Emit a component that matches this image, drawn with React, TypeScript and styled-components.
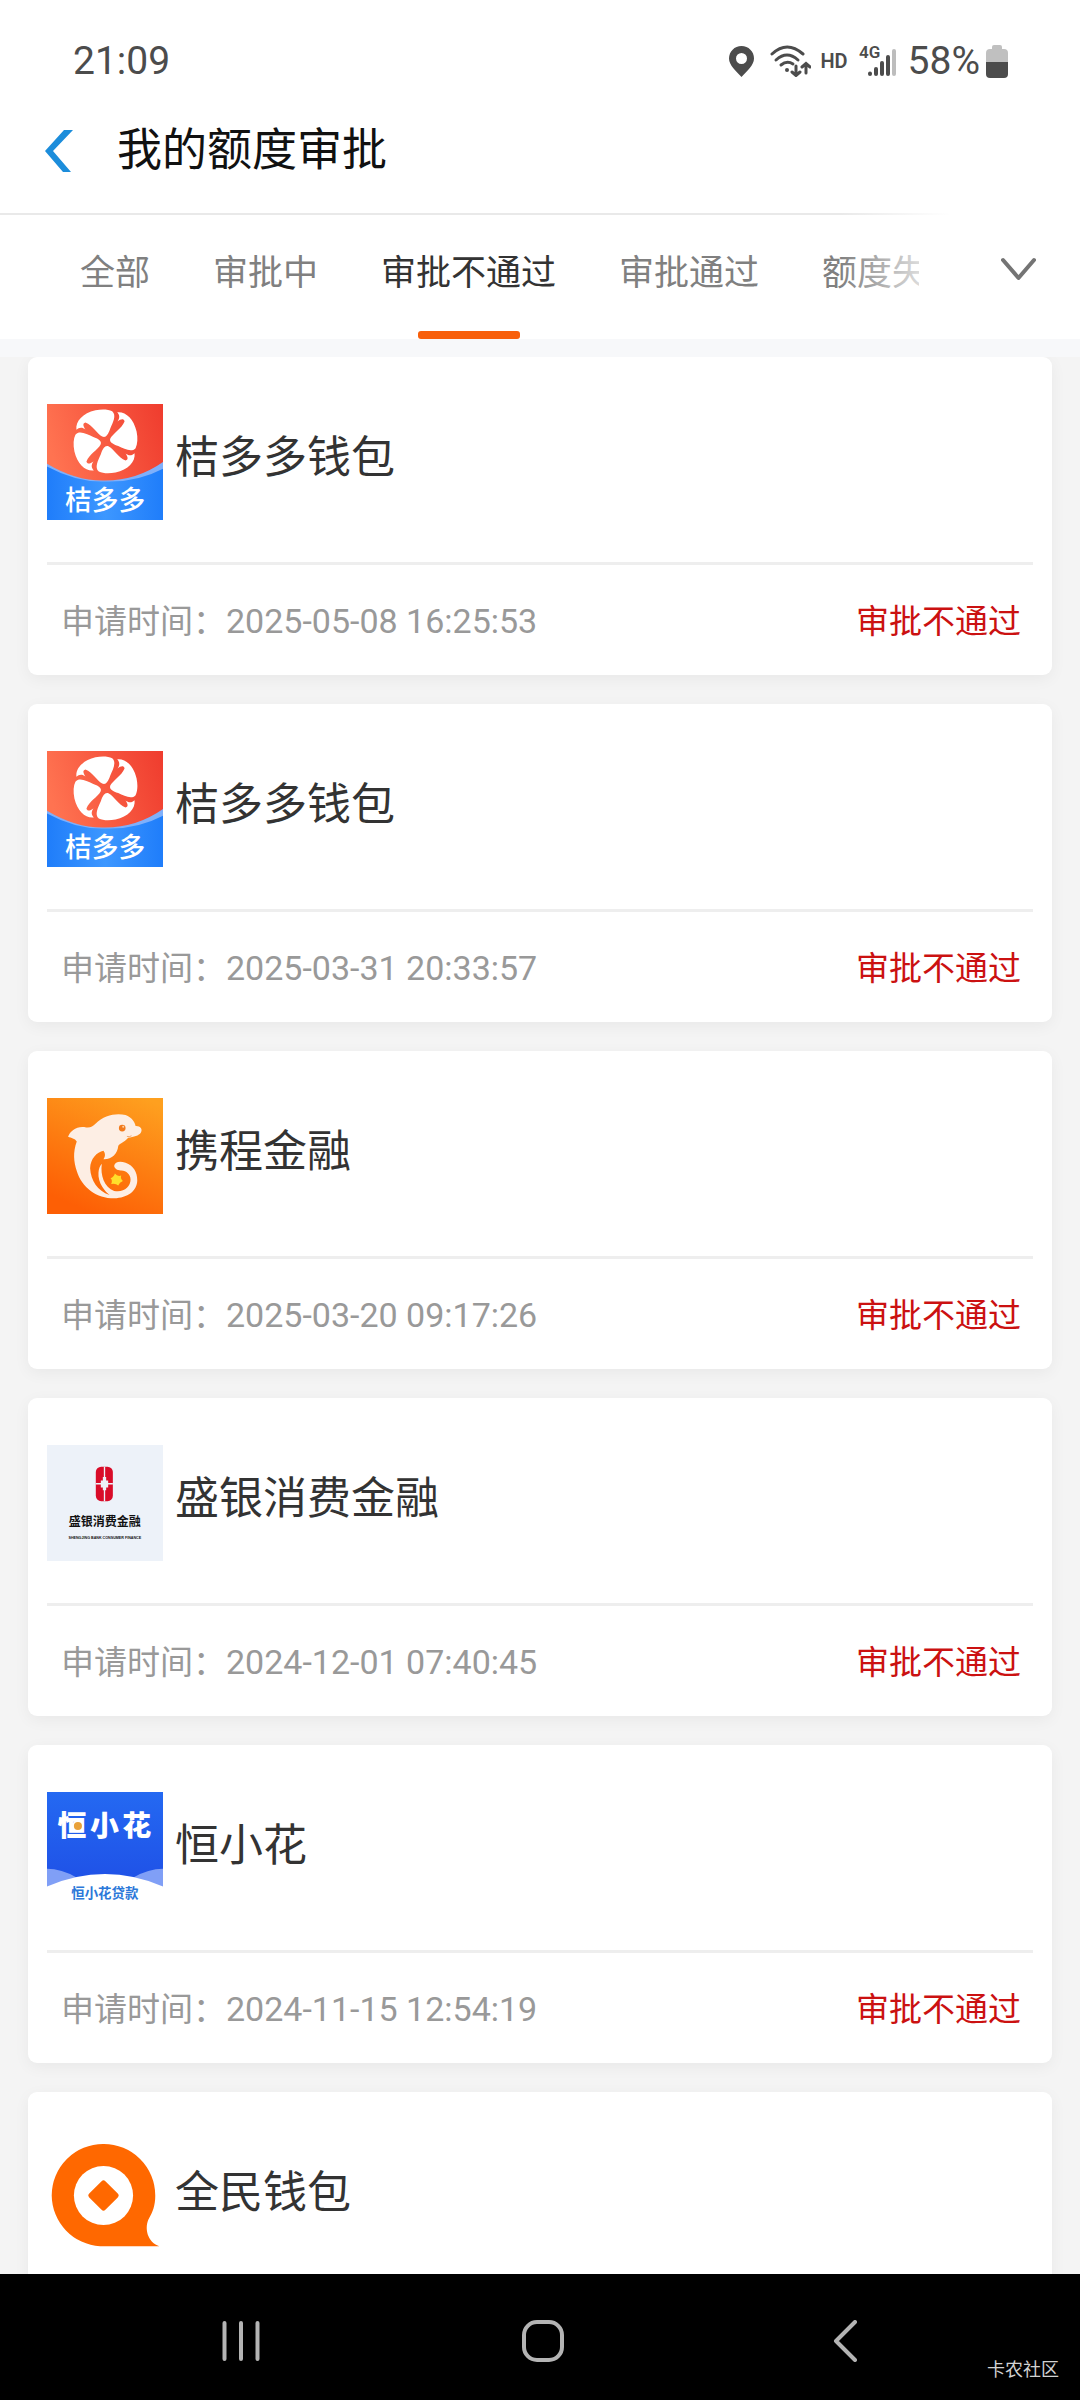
import React, { useState } from "react";
import styled, { createGlobalStyle } from "styled-components";

const GlobalStyle = createGlobalStyle`
  *, *::before, *::after { box-sizing: border-box; }
  html, body { margin: 0; padding: 0; background: #f4f4f4; }
  body { font-family: Roboto, "Noto Sans CJK SC", sans-serif; }
  button { font: inherit; color: inherit; border: 0; padding: 0; background: none; cursor: pointer; }
  h1, h2, p, ul { margin: 0; padding: 0; font-weight: 400; }
  svg { display: block; flex: none; }
`;

const Screen = styled.div`
  display: flex;
  flex-direction: column;
  height: 100vh;
  background: #f4f4f4;
`;

/* ---------- system status bar ---------- */

const StatusBar = styled.div`
  display: flex;
  align-items: center;
  justify-content: space-between;
  flex: none;
  height: 90px;
  padding: 32px 72px 0 73px;
  background: #fff;
  color: #4c4c4c;
  font-size: 39px;
  line-height: 58px;
`;

const StatusIcons = styled.div`
  display: flex;
  align-items: center;
`;

const StatusIcon = styled.svg<{ $gap: number }>`
  margin-right: ${(p) => p.$gap}px;
`;

const HdLabel = styled.span`
  margin-right: 11px;
  font-size: 20px;
  font-weight: 600;
`;

const BatteryLevel = styled.span`
  margin-right: 6px;
`;

/* ---------- title bar ---------- */

const Header = styled.header`
  display: flex;
  align-items: center;
  gap: 44px;
  flex: none;
  height: 123px;
  padding: 0 45px 2px;
  background: #fff;
`;

const Title = styled.h1`
  color: #111;
  font-size: 45px;
  line-height: 60px;
`;

/* ---------- tabs ---------- */

const TabBar = styled.nav`
  position: relative;
  display: flex;
  flex: none;
  height: 144px;
  border-top: 2px solid #e9e9e9;
  border-bottom: 18px solid #f7f8fa;
  background: #fff;
`;

const TabList = styled.div`
  display: flex;
  flex: 1;
  gap: 63px;
  min-width: 0;
  padding-left: 80px;
  overflow: hidden;
`;

const Tab = styled.button<{ $active: boolean }>`
  position: relative;
  flex: none;
  padding-bottom: 16px;
  color: ${(p) => (p.$active ? "#333" : "#808080")};
  font-size: 35px;
  white-space: nowrap;

  &::after {
    content: "";
    position: absolute;
    left: 50%;
    bottom: 0;
    width: 102px;
    height: 8px;
    margin-left: -51px;
    border-radius: 3px;
    background: ${(p) => (p.$active ? "#f85f0b" : "transparent")};
  }
`;

const TabFade = styled.div`
  position: absolute;
  top: -2px;
  right: 0;
  bottom: 0;
  width: 240px;
  background: linear-gradient(to right, rgba(255, 255, 255, 0), #fff 110px);
  pointer-events: none;
`;

const ExpandButton = styled.button`
  position: relative;
  display: flex;
  align-items: center;
  justify-content: flex-end;
  flex: none;
  width: 161px;
  padding: 0 44px 16px 0;
`;

/* ---------- application cards ---------- */

const CardList = styled.ul`
  display: flex;
  flex: 1;
  flex-direction: column;
  gap: 29px;
  min-height: 0;
  padding: 0 28px;
  overflow-y: auto;
  scrollbar-width: none;
  list-style: none;
`;

const Card = styled.li`
  flex: none;
  padding: 0 19px;
  border-radius: 9px;
  background: #fff;
  box-shadow: 0 4px 16px rgba(0, 0, 0, 0.05);
`;

const CardHead = styled.div`
  display: flex;
  align-items: center;
  gap: 12px;
  padding: 47px 0 42px;
  border-bottom: 3px solid #eee;
`;

const CardName = styled.h2`
  padding-bottom: 8px;
  color: #333;
  font-size: 44px;
  line-height: 60px;
`;

const CardFoot = styled.div`
  display: flex;
  align-items: center;
  justify-content: space-between;
  height: 110px;
  padding: 0 12px 2px 14px;
`;

const Applied = styled.p`
  color: #999;
  font-size: 33px;
`;

const AppliedAt = styled.time`
  font-size: 34px;
`;

const Result = styled.p`
  color: #cb1111;
  font-size: 33px;
`;

/* ---------- system navigation bar ---------- */

const SystemNav = styled.nav`
  position: relative;
  display: grid;
  grid-template-columns: repeat(3, 1fr);
  flex: none;
  height: 126px;
  padding: 8px 84px 0 90px;
  background: #000;
`;

const SystemButton = styled.button`
  display: flex;
  align-items: center;
  justify-content: center;
`;

const Watermark = styled.span`
  position: absolute;
  right: 21px;
  bottom: 16px;
  color: #d2d2d2;
  font-size: 18px;
  line-height: 28px;
`;

/* ---------- logos ---------- */

const LOGO = 116;
const LOGO_FONT = '"Noto Sans CJK SC", sans-serif';

function JieduoduoLogo({ id }: { id: string }) {
  const petal =
    "M-10 -15 C-26 -24 -38 -48 -60 -57 C-70 -54 -66 -45 -60 -36 C-70 -44 -80 -42 -87 -35 C-90 -60 -68 -84 -30 -93 C-10 -97 8 -96 20 -90 C34 -78 22 -56 14 -38 C7 -18 0 -10 -10 -15 Z";
  return (
    <svg width={LOGO} height={LOGO} viewBox="21 33 347 347" role="img" aria-label="桔多多">
      <defs>
        <linearGradient id={`${id}-red`} x1="0" y1="0.3" x2="1" y2="0">
          <stop offset="0" stopColor="#ff7351" />
          <stop offset="1" stopColor="#ef3c2e" />
        </linearGradient>
        <linearGradient id={`${id}-blue`} x1="0" x2="1">
          <stop offset="0" stopColor="#1f7dfa" />
          <stop offset="0.5" stopColor="#3d97ff" />
          <stop offset="1" stopColor="#1f7dfa" />
        </linearGradient>
      </defs>
      <rect x="21" y="33" width="347" height="347" fill={`url(#${id}-red)`} />
      <path d="M21 212 Q110 265 195 262 Q290 262 369 206 V380 H21 Z" fill="#7fb0fb" />
      <path d="M21 220 Q110 268 195 265 Q290 268 369 226 V380 H21 Z" fill={`url(#${id}-blue)`} />
      <g transform="translate(196 145)" fill="#fff">
        {[0, 90, 180, 270].map((angle) => (
          <path key={angle} d={petal} transform={`rotate(${angle})`} />
        ))}
      </g>
      <text x="195" y="349" textAnchor="middle" fill="#fff" fontFamily={LOGO_FONT} fontSize="80" fontWeight="500">
        桔多多
      </text>
    </svg>
  );
}

function CtripLogo() {
  return (
    <svg width={LOGO} height={LOGO} viewBox="21 22 347 347" role="img" aria-label="携程金融">
      <defs>
        <linearGradient id="ctrip-bg" x1="0.85" y1="0" x2="0.4" y2="1">
          <stop offset="0" stopColor="#fea01f" />
          <stop offset="0.5" stopColor="#fd7f12" />
          <stop offset="1" stopColor="#fd5f05" />
        </linearGradient>
      </defs>
      <rect x="21" y="22" width="347" height="347" fill="url(#ctrip-bg)" />
      <path
        fill="#fdeee4"
        d="M84 138 C90 120 112 104 138 110 C150 112 158 107 166 99 C192 72 230 66 256 73 C275 80 284 95 286 106 C300 105 308 116 302 125 C296 135 280 138 264 141 C250 157 236 158 234 166 C232 188 215 206 190 205 C196 197 196 188 190 180 C170 184 151 204 150 232 C152 268 172 300 208 312 C196 304 172 276 175 245 C176 234 179 226 185 219 C180 252 192 290 222 300 C250 306 271 288 271 266 C271 250 258 240 244 239 C232 240 222 233 222 225 C224 212 240 210 256 216 C280 224 291 245 291 268 C291 300 262 321 222 322 C170 322 125 290 110 240 C101 212 98 185 110 152 C104 143 94 142 84 138 Z"
      />
      <circle cx="246" cy="112" r="10" fill="#f27a1c" />
      <circle cx="249" cy="108" r="3" fill="#fcd2a8" />
      <path d="M260 137 Q268 139 274 135" fill="none" stroke="#e9853c" strokeWidth="2" />
      <path d="M224 248 Q232 258 243 254 Q240 264 248 270 Q238 274 234 284 Q227 276 213 279 Q218 268 211 262 Q222 258 224 248 Z" fill="#ffdf2b" />
    </svg>
  );
}

function ShengyinLogo() {
  return (
    <svg width={LOGO} height={LOGO} viewBox="52 132 347 347" role="img" aria-label="盛银消费金融">
      <rect x="52" y="132" width="347" height="347" fill="#edf2f9" />
      <rect x="198" y="197" width="51" height="103" rx="16" fill="#d90c29" />
      <path d="M224 197 V300 M198 248 H249" stroke="#edf2f9" strokeWidth="4" />
      <path d="M219 228 H229 V238 H235 V259 H229 V267 H219 V259 H213 V238 H219 Z" fill="#edf2f9" />
      <text x="225" y="373" textAnchor="middle" fill="#111" fontFamily={LOGO_FONT} fontSize="36" fontWeight="700">
        盛银消费金融
      </text>
      <text x="225" y="412" textAnchor="middle" fill="#111" fontFamily="Liberation Sans, sans-serif" fontSize="11" fontWeight="700">
        SHENGJING BANK CONSUMER FINANCE
      </text>
    </svg>
  );
}

function HengxiaohuaLogo() {
  return (
    <svg width={LOGO} height={LOGO} viewBox="52 152 345 345" role="img" aria-label="恒小花贷款">
      <defs>
        <linearGradient id="heng-bg" x1="0" y1="0" x2="0" y2="1">
          <stop offset="0" stopColor="#2469f2" />
          <stop offset="1" stopColor="#1f50e6" />
        </linearGradient>
      </defs>
      <rect x="52" y="152" width="345" height="280" fill="url(#heng-bg)" />
      <path d="M52 380 Q95 380 140 406 L52 440 Z M397 380 Q354 380 309 406 L397 440 Z" fill="#809ff6" />
      <path d="M52 433 Q224 359 397 433 V497 H52 Z" fill="#fff" />
      <g fill="#fff" fontFamily={LOGO_FONT} fontSize="86" fontWeight="900">
        <text x="83" y="284">恒</text>
        <text x="180" y="284">小</text>
        <text x="276" y="284">花</text>
      </g>
      <circle cx="144" cy="253" r="18" fill="#fff" />
      <circle cx="144" cy="253" r="12" fill="#e9a13a" />
      <text x="224" y="467" textAnchor="middle" fill="#2b78d9" fontFamily={LOGO_FONT} fontSize="40" fontWeight="700">
        恒小花贷款
      </text>
    </svg>
  );
}

function QuanminLogo() {
  return (
    <svg width={LOGO} height={LOGO} viewBox="52 177 345 345" role="img" aria-label="全民钱包">
      <path
        fill="#ff6800"
        d="M220 192 A153 153 0 0 1 374 345 C374 376 366 394 356 412 C340 440 350 484 386 496 H210 A153 153 0 0 1 66 345 A153 153 0 0 1 220 192 Z"
      />
      <circle cx="220" cy="345" r="88" fill="#fff" />
      <rect x="186" y="311" width="68" height="68" rx="8" fill="#ff6800" transform="rotate(45 220 345)" />
    </svg>
  );
}

/* ---------- data ---------- */

const TABS = ["全部", "审批中", "审批不通过", "审批通过", "额度失效"];

const APPLICATIONS = [
  { name: "桔多多钱包", time: "2025-05-08 16:25:53", logo: <JieduoduoLogo id="jdd-a" /> },
  { name: "桔多多钱包", time: "2025-03-31 20:33:57", logo: <JieduoduoLogo id="jdd-b" /> },
  { name: "携程金融", time: "2025-03-20 09:17:26", logo: <CtripLogo /> },
  { name: "盛银消费金融", time: "2024-12-01 07:40:45", logo: <ShengyinLogo /> },
  { name: "恒小花", time: "2024-11-15 12:54:19", logo: <HengxiaohuaLogo /> },
  { name: "全民钱包", time: "", logo: <QuanminLogo /> },
];

export default function App() {
  const [active, setActive] = useState(2);

  return (
    <Screen>
      <GlobalStyle />
      <StatusBar>
        <span>21:09</span>
        <StatusIcons>
          <StatusIcon $gap={16} width="25" height="31" viewBox="0 0 25 31" aria-hidden>
            <path fill="#4c4c4c" fillRule="evenodd" d="M12.5 0 C19.5 0 25 5.5 25 12.5 C25 19 18 25 12.5 31 C7 25 0 19 0 12.5 C0 5.5 5.5 0 12.5 0 Z M12.5 7 A5.5 5.5 0 1 0 12.5 18 A5.5 5.5 0 1 0 12.5 7 Z" />
          </StatusIcon>
          <StatusIcon $gap={9} width="41" height="32" viewBox="0 0 41 32" aria-hidden>
            <g fill="none" stroke="#4c4c4c" strokeWidth="3" strokeLinecap="round">
              <path d="M2 9 Q17 -5 33 9" />
              <path d="M6 15 Q17 5 28 15" />
              <path d="M11 20 Q17 15 23 19" />
              <path d="M26 21 V30 M22 27 L26 30.5 L30 27 M36 28 V19 M32 22 L36 18.5 L40 22" />
            </g>
            <circle cx="17" cy="25" r="2" fill="#4c4c4c" />
          </StatusIcon>
          <HdLabel>HD</HdLabel>
          <StatusIcon $gap={11} width="38" height="44" viewBox="0 -6 38 44" aria-hidden>
            <text x="0" y="13" fill="#4c4c4c" fontFamily="Roboto, sans-serif" fontSize="17" fontWeight="600">4G</text>
            <g strokeWidth="4" strokeLinecap="round" stroke="#4c4c4c">
              <path d="M11 28.5 V29" />
              <path d="M17 24 V29" />
              <path d="M23 18 V29" />
              <path d="M29 12 V29" />
              <path d="M35 6 V29" stroke="#bdbdbd" />
            </g>
          </StatusIcon>
          <BatteryLevel>58%</BatteryLevel>
          <svg width="22" height="33" viewBox="0 0 22 33" aria-hidden>
            <path d="M6 2 Q6 0 8 0 H14 Q16 0 16 2 V4 H18 Q22 4 22 8 V17 H0 V8 Q0 4 4 4 H6 Z" fill="#c0c0c0" />
            <path d="M0 17 H22 V29 Q22 33 18 33 H4 Q0 33 0 29 Z" fill="#4c4c4c" />
          </svg>
        </StatusIcons>
      </StatusBar>

      <Header>
        <button type="button" aria-label="返回">
          <svg width="28" height="42" viewBox="0 0 28 42" aria-hidden>
            <path d="M19 0 H28 L8 21 L26 42 H18 L0 21 Z" fill="#1c8ddb" />
          </svg>
        </button>
        <Title>我的额度审批</Title>
      </Header>

      <TabBar>
        <TabList role="tablist">
          {TABS.map((label, i) => (
            <Tab key={label} type="button" role="tab" aria-selected={i === active} $active={i === active} onClick={() => setActive(i)}>
              {label}
            </Tab>
          ))}
        </TabList>
        <TabFade />
        <ExpandButton type="button" aria-label="展开">
          <svg width="35" height="24" viewBox="0 0 35 24" aria-hidden>
            <path d="M2 3 L17.5 21 L33 3" fill="none" stroke="#747474" strokeWidth="4" strokeLinecap="round" strokeLinejoin="round" />
          </svg>
        </ExpandButton>
      </TabBar>

      <CardList>
        {APPLICATIONS.map((item) => (
          <Card key={item.name + item.time}>
            <CardHead>
              {item.logo}
              <CardName>{item.name}</CardName>
            </CardHead>
            <CardFoot>
              {item.time && (
                <>
                  <Applied>
                    申请时间：<AppliedAt>{item.time}</AppliedAt>
                  </Applied>
                  <Result>审批不通过</Result>
                </>
              )}
            </CardFoot>
          </Card>
        ))}
      </CardList>

      <SystemNav>
        <SystemButton type="button" aria-label="最近任务">
          <svg width="38" height="42" viewBox="0 0 38 42" aria-hidden>
            <path d="M2.5 3 V39 M19 3 V39 M35.5 3 V39" stroke="#b4b4b4" strokeWidth="4" strokeLinecap="round" />
          </svg>
        </SystemButton>
        <SystemButton type="button" aria-label="主屏幕">
          <svg width="42" height="42" viewBox="0 0 42 42" aria-hidden>
            <rect x="2" y="2" width="38" height="38" rx="13" fill="none" stroke="#b4b4b4" strokeWidth="4" />
          </svg>
        </SystemButton>
        <SystemButton type="button" aria-label="返回">
          <svg width="24" height="42" viewBox="0 0 24 42" aria-hidden>
            <path d="M22 2 L3 21 L22 40" fill="none" stroke="#b4b4b4" strokeWidth="4" strokeLinecap="round" strokeLinejoin="round" />
          </svg>
        </SystemButton>
        <Watermark>卡农社区</Watermark>
      </SystemNav>
    </Screen>
  );
}
